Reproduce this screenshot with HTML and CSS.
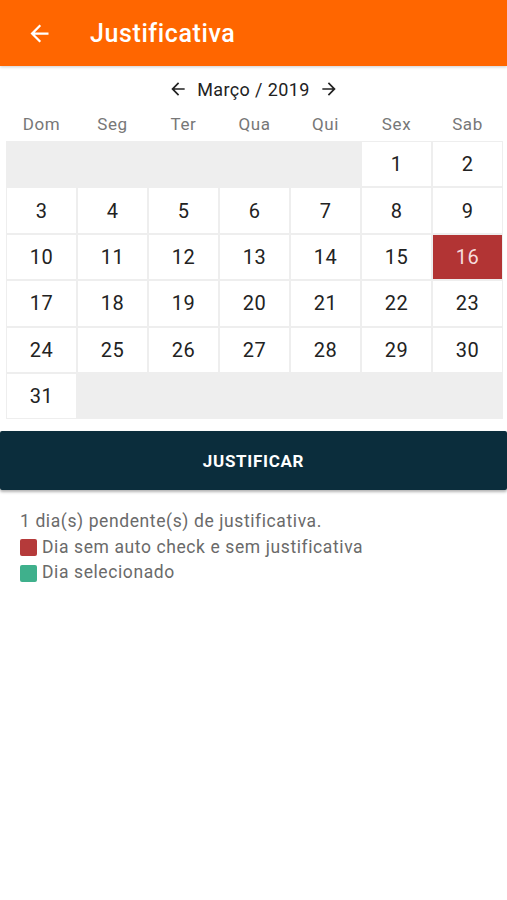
FILE: index.html
```html
<!DOCTYPE html>
<html lang="pt">
<head>
<meta charset="utf-8">
<title>Justificativa</title>
<link rel="stylesheet" href="styles.css">
</head>
<body>
<header class="appbar">
  <svg class="back" viewBox="0 0 24 24" width="27" height="27"><path d="M20 11H7.83l5.59-5.59L12 4l-8 8 8 8 1.41-1.41L7.83 13H20v-2z" fill="#fff"/></svg>
  <h1 class="title">Justificativa</h1>
</header>
<main>
  <div class="monthnav">
    <svg viewBox="0 0 24 24" width="20" height="20"><path d="M20 11H7.83l5.59-5.59L12 4l-8 8 8 8 1.41-1.41L7.83 13H20v-2z" fill="#222"/></svg>
    <span class="month">Março / 2019</span>
    <svg viewBox="0 0 24 24" width="20" height="20"><path d="M12 4l-1.41 1.41L16.17 11H4v2h12.17l-5.58 5.59L12 20l8-8z" fill="#222"/></svg>
  </div>
  <div class="weekdays">
    <span>Dom</span><span>Seg</span><span>Ter</span><span>Qua</span><span>Qui</span><span>Sex</span><span>Sab</span>
  </div>
  <div class="grid">
    <div class="day first">1</div><div class="day">2</div>
    <div class="day">3</div><div class="day">4</div><div class="day">5</div><div class="day">6</div><div class="day">7</div><div class="day">8</div><div class="day">9</div>
    <div class="day">10</div><div class="day">11</div><div class="day">12</div><div class="day">13</div><div class="day">14</div><div class="day">15</div><div class="day pending">16</div>
    <div class="day">17</div><div class="day">18</div><div class="day">19</div><div class="day">20</div><div class="day">21</div><div class="day">22</div><div class="day">23</div>
    <div class="day">24</div><div class="day">25</div><div class="day">26</div><div class="day">27</div><div class="day">28</div><div class="day">29</div><div class="day">30</div>
    <div class="day">31</div>
  </div>
  <button class="action">JUSTIFICAR</button>
  <div class="legend">
    <p>1 dia(s) pendente(s) de justificativa.</p>
    <p><span class="swatch red"></span>Dia sem auto check e sem justificativa</p>
    <p><span class="swatch green"></span>Dia selecionado</p>
  </div>
</main>
</body>
</html>
```
FILE: styles.css
```css
* { box-sizing: border-box; }
body {
  margin: 0;
  font-family: Roboto, "Liberation Sans", sans-serif;
  background: #fff;
  color: #222;
}
.appbar {
  height: 66px;
  background: #ff6600;
  display: flex;
  align-items: center;
  padding-left: 26px;
  box-shadow: 0 1px 3px rgba(0,0,0,0.2);
}
.back { margin-right: 37px; }
.title {
  margin: 0;
  color: #fff;
  font-size: 25px;
  font-weight: 500;
  letter-spacing: 0.6px;
}
.monthnav {
  display: flex;
  justify-content: center;
  align-items: center;
  gap: 9px;
  margin-top: 13px;
  height: 20px;
}
.month { font-size: 18px; color: #222; letter-spacing: 0.4px; }
.weekdays {
  display: grid;
  grid-template-columns: repeat(7, 1fr);
  margin: 9px 4px 0 6px;
  height: 32px;
  align-items: center;
}
.weekdays span {
  text-align: center;
  color: #777;
  font-size: 17px;
  letter-spacing: 0.6px;
}
.grid {
  display: grid;
  grid-template-columns: repeat(7, 1fr);
  grid-auto-rows: 44.4px;
  gap: 2px;
  padding: 1px;
  margin: 1px 4px 0 6px;
  background: #eeeeee;
}
.day {
  background: #fff;
  display: flex;
  align-items: center;
  justify-content: center;
  font-size: 20px;
  letter-spacing: 0.5px;
  color: #222;
}
.day.first { grid-column-start: 6; }
.day.pending {
  background: #b23434;
  color: #f6dddd;
}
.action {
  display: block;
  width: 100%;
  height: 59px;
  margin-top: 12px;
  border: none;
  border-radius: 2px;
  background: #0b2d3c;
  color: #fff;
  font-family: Roboto, "Liberation Sans", sans-serif;
  font-size: 17px;
  font-weight: 700;
  letter-spacing: 0.7px;
  box-shadow: 0 2px 3px rgba(0,0,0,0.3);
}
.legend {
  padding: 19px 20px 0 20px;
  color: #6a6a6a;
  font-size: 17.5px;
  letter-spacing: 0.6px;
}
.legend p {
  margin: 0;
  line-height: 25.5px;
  display: flex;
  align-items: center;
}
.swatch {
  width: 17px;
  height: 17px;
  border-radius: 2px;
  margin-right: 5px;
}
.swatch.red { background: #b53a3a; }
.swatch.green { background: #3fb08c; }
```
